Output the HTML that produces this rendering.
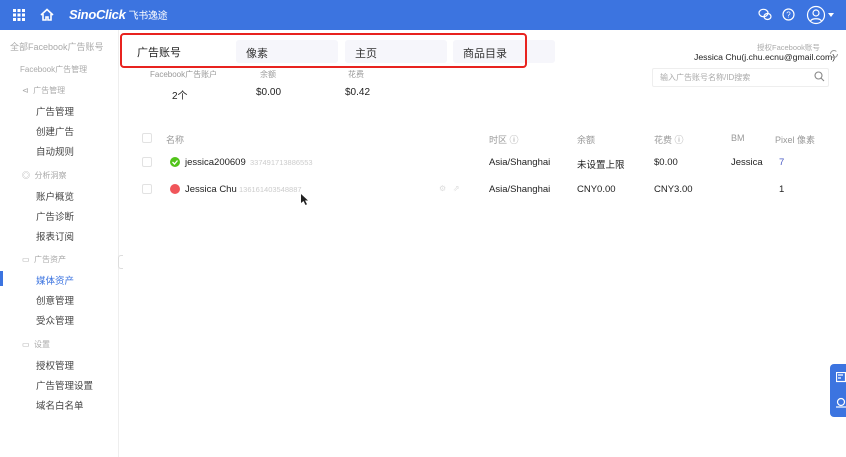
<!DOCTYPE html>
<html><head><meta charset="utf-8"><style>
*{margin:0;padding:0;box-sizing:border-box}
body{width:846px;height:457px;overflow:hidden;background:#fff;font-family:"Liberation Sans","Noto Sans CJK SC",sans-serif;color:#333;position:relative}
.a{position:absolute;white-space:nowrap}
.hd{position:absolute;left:0;top:0;width:846px;height:30px;background:#3c74e0}
.s{font-size:9.5px;color:#444}
.g{font-size:8px;color:#aaa}
.t{font-size:9px;color:#999}
.c{font-size:9.5px;color:#222}
.tab{position:absolute;top:40px;height:23px;width:102px;background:#f6f6fb;border-radius:3px;font-size:11px;color:#333;padding:5px 0 0 10px}
.cb{position:absolute;width:10px;height:10px;border:1px solid #e2e2e2;border-radius:2px}
</style></head><body>
<div class="hd">
 <svg class="a" style="left:13px;top:9px" width="12" height="12"><g fill="#fff"><rect x="0" y="0" width="3" height="3"/><rect x="4.5" y="0" width="3" height="3"/><rect x="9" y="0" width="3" height="3"/><rect x="0" y="4.5" width="3" height="3"/><rect x="4.5" y="4.5" width="3" height="3"/><rect x="9" y="4.5" width="3" height="3"/><rect x="0" y="9" width="3" height="3"/><rect x="4.5" y="9" width="3" height="3"/><rect x="9" y="9" width="3" height="3"/></g></svg>
 <svg class="a" style="left:40px;top:8px" width="14" height="13"><path d="M1 7L7 1.5 13 7M3 6v6h3V9h2v3h3V6" fill="none" stroke="#fff" stroke-width="1.6"/></svg>
 <div class="a" style="left:69px;top:7px;color:#fff;font-size:13px;font-weight:bold;font-style:italic;letter-spacing:-0.3px">SinoClick<span style="font-size:10px;font-style:normal;font-weight:normal;margin-left:3px">飞书逸途</span></div>
 <svg class="a" style="left:758px;top:8px" width="14" height="13"><g fill="none" stroke="#fff" stroke-width="1.2"><ellipse cx="5.5" cy="5" rx="4.5" ry="3.7"/><ellipse cx="9.5" cy="8.5" rx="3.5" ry="3"/></g></svg>
 <svg class="a" style="left:782px;top:8px" width="13" height="13"><circle cx="6.5" cy="6.5" r="5.5" fill="none" stroke="#fff" stroke-width="1.2"/><text x="6.5" y="9.5" font-size="8" fill="#fff" text-anchor="middle" font-family="Liberation Sans">?</text></svg>
 <svg class="a" style="left:806px;top:5px" width="30" height="20"><circle cx="10" cy="10" r="8.5" fill="none" stroke="#fff" stroke-width="1.2"/><circle cx="10" cy="8" r="3" fill="none" stroke="#fff" stroke-width="1.2"/><path d="M4.5 16c1.5-3 9.5-3 11 0" fill="none" stroke="#fff" stroke-width="1.2"/><path d="M22 8h6l-3 4z" fill="#fff"/></svg>
</div>
<div class="a" style="left:118px;top:30px;width:1px;height:427px;background:#eee"></div>
<div class="a g" style="left:10px;top:40px;font-size:9px">全部Facebook广告账号</div>
<div class="a g" style="left:20px;top:64px">Facebook广告管理</div>
<div class="a g" style="left:22px;top:85px">⊲ &nbsp;广告管理</div>
<div class="a s" style="left:36px;top:104px">广告管理</div>
<div class="a s" style="left:36px;top:124px">创建广告</div>
<div class="a s" style="left:36px;top:144px">自动规则</div>
<div class="a g" style="left:22px;top:170px">◎ &nbsp;分析洞察</div>
<div class="a s" style="left:36px;top:189px">账户概览</div>
<div class="a s" style="left:36px;top:209px">广告诊断</div>
<div class="a s" style="left:36px;top:229px">报表订阅</div>
<div class="a g" style="left:22px;top:254px">▭ &nbsp;广告资产</div>
<div class="a" style="left:0;top:271px;width:3px;height:15px;background:#3c74e0"></div>
<div class="a s" style="left:36px;top:273px;color:#3c74e0">媒体资产</div>
<div class="a s" style="left:36px;top:293px">创意管理</div>
<div class="a s" style="left:36px;top:313px">受众管理</div>
<div class="a g" style="left:22px;top:339px">▭ &nbsp;设置</div>
<div class="a s" style="left:36px;top:358px">授权管理</div>
<div class="a s" style="left:36px;top:378px">广告管理设置</div>
<div class="a s" style="left:36px;top:398px">域名白名单</div>
<div class="a" style="left:118px;top:255px;width:5px;height:14px;border:1px solid #ddd;border-right:none;border-radius:3px 0 0 3px"></div>

<div class="a" style="left:137px;top:44px;font-size:11px;color:#222">广告账号</div>
<div class="tab" style="left:236px">像素</div>
<div class="tab" style="left:345px">主页</div>
<div class="tab" style="left:453px">商品目录</div>
<div class="a" style="left:120px;top:33px;width:407px;height:35px;border:2.5px solid #e8231f;border-radius:4px"></div>

<div class="a t" style="left:150px;top:69px;font-size:8px">Facebook广告账户</div>
<div class="a t" style="left:260px;top:69px;font-size:8px">余额</div>
<div class="a t" style="left:348px;top:69px;font-size:8px">花费</div>
<div class="a c" style="left:172px;top:87px;font-size:10px">2个</div>
<div class="a c" style="left:256px;top:87px;font-size:10px">$0.00</div>
<div class="a c" style="left:345px;top:87px;font-size:10px">$0.42</div>

<div class="a g" style="left:757px;top:42px;font-size:7.5px">授权Facebook账号</div>
<div class="a c" style="left:694px;top:52px;font-size:8.7px">Jessica Chu(j.chu.ecnu@gmail.com)</div>
<svg class="a" style="left:829px;top:49px" width="10" height="10"><circle cx="5" cy="5" r="3.5" fill="none" stroke="#999" stroke-width="1" stroke-dasharray="8 3"/></svg>
<div class="a" style="left:652px;top:68px;width:177px;height:19px;border:1px solid #eee;border-radius:2px"></div>
<div class="a g" style="left:660px;top:72px">输入广告账号名称/ID搜索</div>
<svg class="a" style="left:814px;top:71px" width="11" height="11"><circle cx="4.5" cy="4.5" r="3.5" fill="none" stroke="#888" stroke-width="1.1"/><path d="M7 7l3 3" stroke="#888" stroke-width="1.1"/></svg>

<div class="cb" style="left:142px;top:133px"></div>
<div class="a t" style="left:166px;top:133px">名称</div>
<div class="a t" style="left:489px;top:133px">时区 ⓘ</div>
<div class="a t" style="left:577px;top:133px">余额</div>
<div class="a t" style="left:654px;top:133px">花费 ⓘ</div>
<div class="a t" style="left:731px;top:133px">BM</div>
<div class="a t" style="left:775px;top:133px">Pixel 像素</div>

<div class="cb" style="left:142px;top:157px"></div>
<svg class="a" style="left:170px;top:157px" width="10" height="10"><circle cx="5" cy="5" r="5" fill="#52c41a"/><path d="M2.5 5l2 2 3-3.5" fill="none" stroke="#fff" stroke-width="1.3"/></svg>
<div class="a c" style="left:185px;top:157px">jessica200609</div>
<div class="a g" style="left:250px;top:158px;color:#ccc;font-size:7.5px">337491713886553</div>
<div class="a c" style="left:489px;top:157px">Asia/Shanghai</div>
<div class="a c" style="left:577px;top:157px">未设置上限</div>
<div class="a c" style="left:654px;top:157px">$0.00</div>
<div class="a c" style="left:731px;top:157px">Jessica</div>
<div class="a c" style="left:779px;top:157px;color:#4a5bc4">7</div>

<div class="cb" style="left:142px;top:184px"></div>
<div class="a" style="left:170px;top:184px;width:10px;height:10px;border-radius:50%;background:#f0555a"></div>
<div class="a c" style="left:185px;top:184px">Jessica Chu</div>
<div class="a g" style="left:239px;top:185px;color:#ccc;font-size:7.5px">136161403548887</div>
<div class="a g" style="left:439px;top:184px;color:#ddd">⚙ &nbsp; ⇗</div>
<div class="a c" style="left:489px;top:184px">Asia/Shanghai</div>
<div class="a c" style="left:577px;top:184px">CNY0.00</div>
<div class="a c" style="left:654px;top:184px">CNY3.00</div>
<div class="a c" style="left:779px;top:184px">1</div>
<svg class="a" style="left:301px;top:194px" width="8" height="11"><path d="M0 0v9l2.5-2 2 4 1.5-.7-2-3.8H7z" fill="#222"/></svg>

<div class="a" style="left:830px;top:364px;width:20px;height:53px;background:#3c74e0;border-radius:4px 0 0 4px"></div>
<svg class="a" style="left:836px;top:372px" width="10" height="40"><g fill="none" stroke="#fff" stroke-width="1.2"><rect x="0.5" y="0.5" width="9" height="9"/><path d="M2 3h5M2 6h3"/><circle cx="5" cy="30" r="3.5"/><path d="M0 35h10"/></g></svg>
</body></html>
